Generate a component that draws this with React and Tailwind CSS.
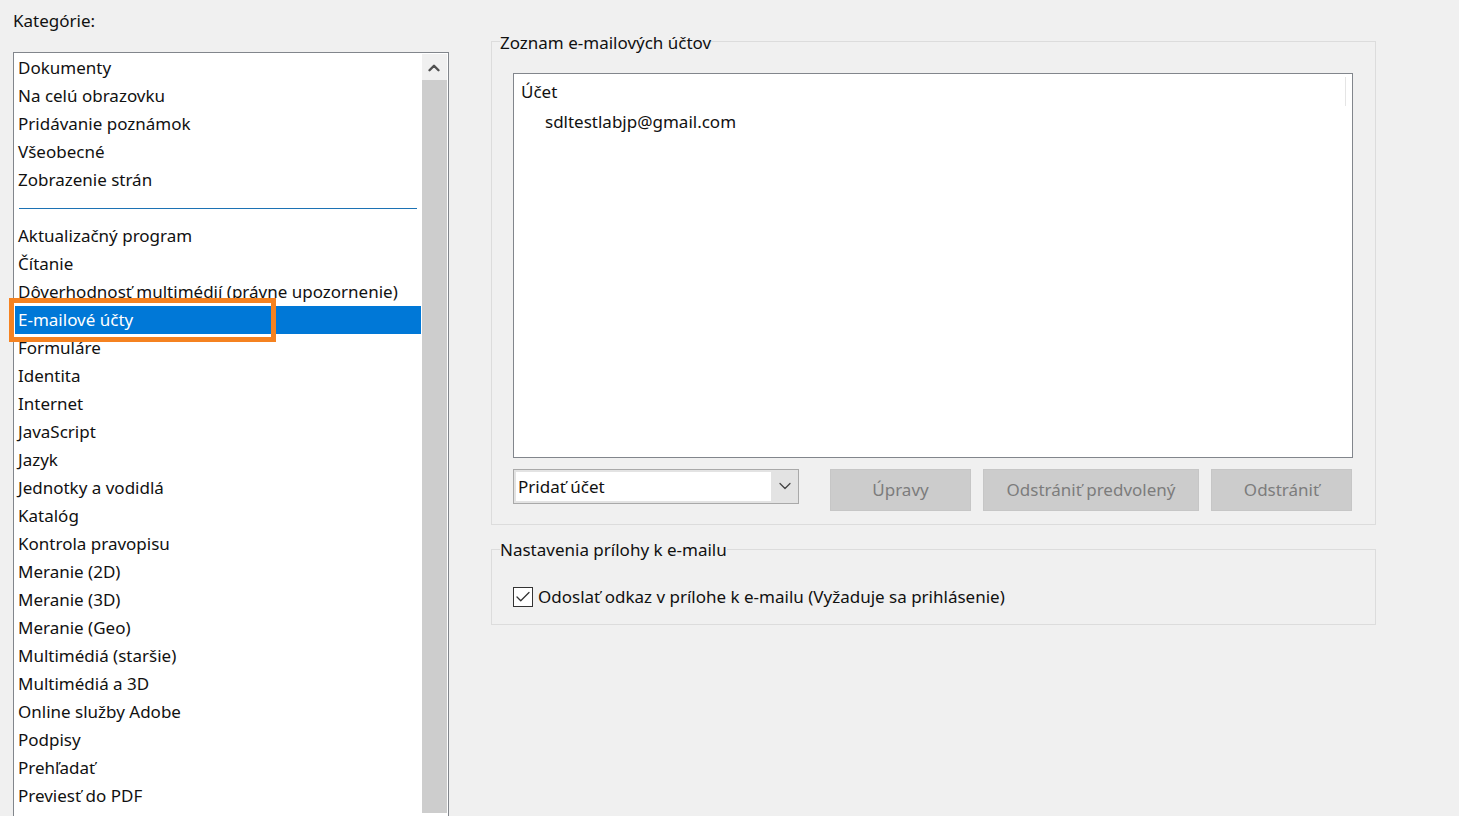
import { Check, ChevronDown, ChevronUp } from "lucide-react";

const topItems = ["Dokumenty", "Na celú obrazovku", "Pridávanie poznámok", "Všeobecné", "Zobrazenie strán"];

const items = [
  "Aktualizačný program",
  "Čítanie",
  "Dôverhodnosť multimédií (právne upozornenie)",
  "E-mailové účty",
  "Formuláre",
  "Identita",
  "Internet",
  "JavaScript",
  "Jazyk",
  "Jednotky a vodidlá",
  "Katalóg",
  "Kontrola pravopisu",
  "Meranie (2D)",
  "Meranie (3D)",
  "Meranie (Geo)",
  "Multimédiá (staršie)",
  "Multimédiá a 3D",
  "Online služby Adobe",
  "Podpisy",
  "Prehľadať",
  "Previesť do PDF",
];

function Row({ label }) {
  const selected = label === "E-mailové účty";
  return (
    <div className={selected ? "h-[28px] pl-[3px] leading-[27px] bg-[#0078d7] text-white" : "h-[28px] pl-[3px] leading-[27px]"}>
      {label}
    </div>
  );
}

function DisabledButton({ label, width }) {
  return (
    <button className={`h-[42px] ${width} bg-[#cccccc] border border-[#c6c6c6] text-[#7c7c7c]`}>
      {label}
    </button>
  );
}

export default function App() {
  return (
    <div className="h-[816px] overflow-hidden bg-[#f0f0f0] text-[#111111] flex text-[17px] font-['Noto_Sans',sans-serif]">
      {/* Categories */}
      <div className="w-[436px] ml-[13px] flex flex-col shrink-0">
        <div className="h-[52px] pt-[6px] leading-[29px]">Kategórie:</div>
        <div className="relative flex-1 bg-white border border-b-0 border-[#82868c] flex pl-px pt-px pr-[1px]">
          <div className="w-[406px]">
            {topItems.map((item) => (
              <Row key={item} label={item} />
            ))}
            <div className="h-[28px] flex items-center pl-[4px] pr-[4px] pt-[1px]">
              <div className="w-full h-px bg-[#1c72b4]" />
            </div>
            {items.map((item) => (
              <Row key={item} label={item} />
            ))}
          </div>
          <div className="ml-[1px] w-[25px] h-[759px] flex flex-col">
            <div className="h-[26px] flex items-center justify-center bg-[#f0f0f0] pt-[2px] pr-[2px]">
              <ChevronUp size={18} strokeWidth={3.2} className="text-[#505050]" />
            </div>
            <div className="flex-1 bg-[#cdcdcd]" />
          </div>
          {/* Highlight */}
          <div className="absolute left-[-5px] top-[245px] w-[267px] h-[44px] border-[5px] border-[#f58220] pointer-events-none" />
        </div>
      </div>

      {/* Right panel */}
      <div className="ml-[42px] w-[885px] shrink-0">
        <fieldset className="mt-[28px] h-[497px] border border-[#dcdcdc] pl-[21px] pr-[22px] min-w-0">
          <legend className="ml-[-13px] leading-[26px] translate-y-[2px]">Zoznam e-mailových účtov</legend>
          <div className="mt-[19px] h-[385px] bg-white border border-[#82868c] flex flex-col">
            <div className="h-[33px] flex">
              <div className="flex-1 pl-[7px] pt-[3px] leading-[29px]">Účet</div>
              <div className="w-px h-[29px] mt-[3px] mr-[6px] bg-[#e5e5e5]" />
            </div>
            <div className="pl-[31px] leading-[29px]">sdltestlabjp@gmail.com</div>
          </div>
          <div className="mt-[11px] flex items-start">
            <div className="h-[35px] w-[286px] border border-[#a9a9a9] bg-[#e3e3e3] flex p-[2px] pr-0">
              <div className="w-[255px] bg-white pl-[2px] leading-[29px]">Pridať účet</div>
              <div className="flex-1 flex items-center justify-center pb-[2px]">
                <ChevronDown size={20} strokeWidth={1.5} className="text-[#444444]" />
              </div>
            </div>
            <div className="ml-[31px] flex gap-[12px]">
              <DisabledButton label="Úpravy" width="w-[141px]" />
              <DisabledButton label="Odstrániť predvolený" width="w-[216px]" />
              <DisabledButton label="Odstrániť" width="w-[141px]" />
            </div>
          </div>
        </fieldset>
        <fieldset className="mt-[11px] h-[89px] border border-[#dcdcdc] px-[21px] min-w-0">
          <legend className="ml-[-13px] leading-[26px] translate-y-px">Nastavenia prílohy k e-mailu</legend>
          <div className="mt-[20px] flex items-center">
            <div className="w-[20px] h-[20px] border border-[#333333] bg-white flex items-center justify-center">
              <Check size={18} strokeWidth={1.75} className="text-[#333333]" />
            </div>
            <span className="ml-[5px] leading-[29px]">Odoslať odkaz v prílohe k e-mailu (Vyžaduje sa prihlásenie)</span>
          </div>
        </fieldset>
      </div>
    </div>
  );
}
